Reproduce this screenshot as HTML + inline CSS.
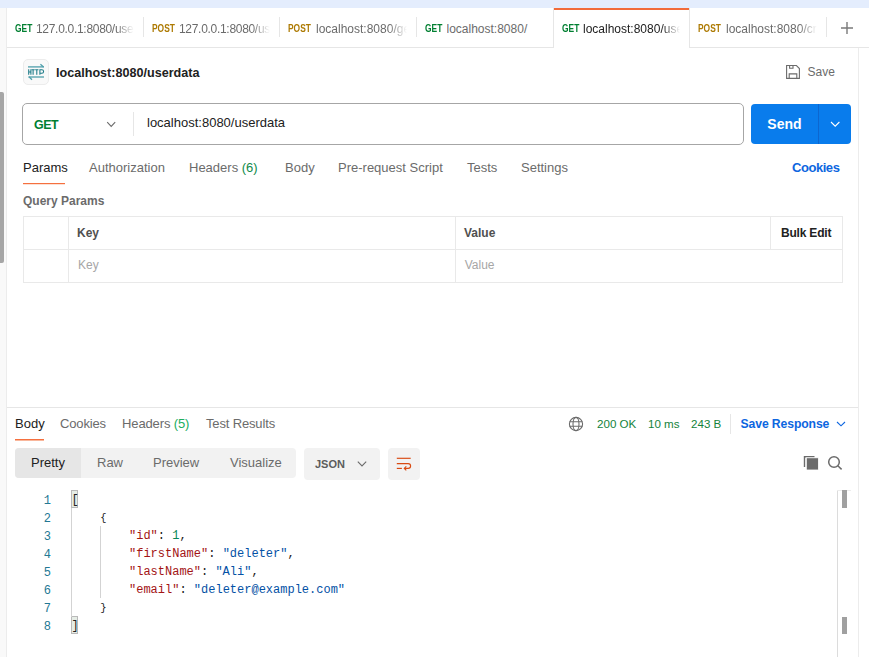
<!DOCTYPE html>
<html><head><meta charset="utf-8">
<style>
*{box-sizing:border-box;margin:0;padding:0}
html,body{width:869px;height:657px;overflow:hidden;background:#fff;font-family:"Liberation Sans",sans-serif;color:#212121;position:relative}
.abs{position:absolute}
.t{position:absolute;white-space:nowrap;line-height:1}
.topband{left:0;top:0;width:869px;height:8px;background:#e4edfd}
.lstrip{left:0;top:8px;width:7px;height:649px;background:#f9f9f9;border-right:1px solid #ececec}
.rstrip{left:858px;top:48px;width:11px;height:610px;background:#fff;border-left:1px solid #ececec}
.tabbar{left:7px;top:8px;width:862px;height:40px;background:#fff;border-bottom:1px solid #e6e6e6}
.m{font-weight:bold;font-size:10px;transform:scaleX(0.84);transform-origin:0 0}
.get{color:#007f31}
.post{color:#ad7a03}
.sep{position:absolute;width:1px;background:#e6e6e6}
.tl{position:absolute;white-space:nowrap;line-height:1;font-size:12px;color:#6b6b6b;overflow:hidden;
 -webkit-mask-image:linear-gradient(to right,#000 calc(100% - 18px),transparent 100%);mask-image:linear-gradient(to right,#000 calc(100% - 18px),transparent 100%)}
.code{position:absolute;left:0;top:0;font-family:"Liberation Mono",monospace;font-size:12px;line-height:18px;white-space:pre;color:#212121}
.k{color:#a31515}
.s{color:#0451a5}
.n{color:#098658}
.ln{position:absolute;white-space:pre;font-family:"Liberation Mono",monospace;font-size:12px;line-height:18px;color:#237893;text-align:right;width:30px}
</style></head><body>
<div class="abs topband"></div>
<div class="abs tabbar"></div>
<div class="abs lstrip"></div>
<div class="abs" style="left:0;top:91.5px;width:4px;height:171px;background:#a6a6a6;border-radius:0 2px 2px 0"></div>
<div class="abs rstrip"></div>

<!-- tabs -->
<div class="t m get" style="left:15px;top:24px">GET</div>
<div class="tl" style="left:36px;top:23px;width:98px;height:14px;letter-spacing:-0.3px">127.0.0.1:8080/user</div>
<div class="sep" style="left:143px;top:17px;height:20px"></div>
<div class="t m post" style="left:152px;top:24px">POST</div>
<div class="tl" style="left:179px;top:23px;width:91px;height:14px;letter-spacing:-0.3px">127.0.0.1:8080/user</div>
<div class="sep" style="left:279px;top:17px;height:20px"></div>
<div class="t m post" style="left:288px;top:24px">POST</div>
<div class="tl" style="left:316px;top:23px;width:91px;height:14px">localhost:8080/get</div>
<div class="sep" style="left:416px;top:17px;height:20px"></div>
<div class="t m get" style="left:425px;top:24px">GET</div>
<div class="tl" style="left:446.5px;top:23px;width:98px;height:14px;-webkit-mask-image:none;mask-image:none">localhost:8080/</div>
<div class="abs" style="left:553px;top:8px;width:137px;height:40px;background:#fff;border-left:1px solid #e6e6e6;border-right:1px solid #e6e6e6"></div>
<div class="abs" style="left:554px;top:8px;width:135px;height:2px;background:#f26b3a"></div>
<div class="t m get" style="left:562px;top:24px">GET</div>
<div class="tl" style="left:583px;top:23px;width:97px;height:14px;color:#212121">localhost:8080/user</div>
<div class="t m post" style="left:698px;top:24px">POST</div>
<div class="tl" style="left:726px;top:23px;width:91px;height:14px">localhost:8080/create</div>
<div class="sep" style="left:826px;top:17px;height:20px"></div>
<svg class="abs" style="left:840px;top:21px" width="14" height="14" viewBox="0 0 14 14"><path d="M7 1V13M1 7H13" stroke="#7a7a7a" stroke-width="1.4"/></svg>

<!-- title -->
<div class="abs" style="left:23px;top:59px;width:26px;height:26px;border:1px solid #ececec;border-radius:5px;background:#f9f9f9"></div>
<svg class="abs" style="left:22px;top:58px" width="28" height="28" viewBox="0 0 28 28">
 <g stroke="#4f9fab" stroke-width="1.3" fill="none">
  <path d="M6 8.9H22"/><path d="M18.4 6.2L21.6 9"/>
  <path d="M6.4 19H22"/><path d="M7 18.8L10 21.8"/>
 </g>
 <g stroke="#1d7b88" stroke-width="1.05" fill="none">
  <path d="M6.7 11.3V16.7M8.9 11.3V16.7M6.7 13.9H8.9"/>
  <path d="M9.5 11.8H12.7M11.1 11.8V16.7"/>
  <path d="M13.2 11.8H16.4M14.8 11.8V16.7"/>
  <path d="M17.9 16.7V11.8H19.8C21.1 11.8 21.6 12.6 21.6 13.5C21.6 14.4 21.1 15.2 19.8 15.2H17.9"/>
 </g>
</svg>
<div class="t" style="left:56px;top:67px;font-size:12.6px;font-weight:bold;color:#212121">localhost:8080/userdata</div>
<svg class="abs" style="left:785px;top:64px" width="16" height="16" viewBox="0 0 16 16">
 <g stroke="#6b6b6b" stroke-width="1.1" fill="none">
  <path d="M1.6 1.5H11.4L14.4 4.5V14.4H1.6Z"/><path d="M4.6 1.6V4.3H8V1.6"/><path d="M4.2 14.3V9.9H11.8V14.3"/>
 </g>
</svg>
<div class="t" style="left:807.6px;top:66px;font-size:12px;color:#6b6b6b">Save</div>

<!-- url bar -->
<div class="abs" style="left:22px;top:103px;width:722px;height:42px;border:1px solid #a6a6a6;border-radius:5px"></div>
<div class="t get" style="left:34px;top:119px;font-size:12.4px;font-weight:bold;letter-spacing:-0.4px">GET</div>
<svg class="abs" style="left:106px;top:121px" width="11" height="8" viewBox="0 0 11 8"><path d="M1.2 1.2L5.2 5.4L9.2 1.2" stroke="#6b6b6b" stroke-width="1.1" fill="none"/></svg>
<div class="sep" style="left:133px;top:112px;height:24px"></div>
<div class="t" style="left:147px;top:116px;font-size:13px;color:#212121">localhost:8080/userdata</div>
<div class="abs" style="left:751px;top:104px;width:100px;height:40px;background:#097cec;border-radius:4px"></div>
<div class="t" style="left:767.3px;top:117px;font-size:14px;font-weight:bold;color:#fff">Send</div>
<div class="abs" style="left:818px;top:104px;width:1px;height:40px;background:#0c66d0"></div>
<svg class="abs" style="left:829px;top:120px" width="12" height="8" viewBox="0 0 12 8"><path d="M2 2L6.2 6.2L10.4 2" stroke="#fff" stroke-width="1.1" fill="none"/></svg>

<!-- request tabs -->
<div class="t" style="left:23px;top:161px;font-size:13px;color:#212121">Params</div>
<div class="abs" style="left:23px;top:183px;width:42px;height:2px;background:linear-gradient(#f5703f 1px,#fde0d4 1px)"></div>
<div class="t" style="left:89px;top:161px;font-size:13px;color:#6b6b6b">Authorization</div>
<div class="t" style="left:189px;top:161px;font-size:13px;color:#6b6b6b">Headers <span style="color:#0f8a4a">(6)</span></div>
<div class="t" style="left:285px;top:161px;font-size:13px;color:#6b6b6b">Body</div>
<div class="t" style="left:338px;top:161px;font-size:13px;color:#6b6b6b">Pre-request Script</div>
<div class="t" style="left:467px;top:161px;font-size:13px;color:#6b6b6b">Tests</div>
<div class="t" style="left:521px;top:161px;font-size:13px;color:#6b6b6b">Settings</div>
<div class="t" style="left:792px;top:161px;font-size:13px;font-weight:bold;color:#0d66e0;letter-spacing:-0.45px">Cookies</div>

<div class="t" style="left:23px;top:195px;font-size:12px;font-weight:bold;color:#6b6b6b">Query Params</div>
<!-- table -->
<div class="abs" style="left:23px;top:216px;width:820px;height:67px;border:1px solid #e9e9e9"></div>
<div class="abs" style="left:23px;top:249px;width:820px;height:1px;background:#e9e9e9"></div>
<div class="abs" style="left:68px;top:216px;width:1px;height:67px;background:#e9e9e9"></div>
<div class="abs" style="left:455px;top:216px;width:1px;height:67px;background:#e9e9e9"></div>
<div class="abs" style="left:770px;top:216px;width:1px;height:34px;background:#e9e9e9"></div>
<div class="t" style="left:77px;top:227px;font-size:12px;font-weight:bold;color:#505050">Key</div>
<div class="t" style="left:464px;top:227px;font-size:12px;font-weight:bold;color:#505050">Value</div>
<div class="t" style="left:781px;top:227px;font-size:12px;font-weight:bold;color:#212121;letter-spacing:-0.2px">Bulk Edit</div>
<div class="t" style="left:78px;top:259px;font-size:12px;color:#a6a6a6">Key</div>
<div class="t" style="left:464.7px;top:259px;font-size:12px;color:#a6a6a6">Value</div>

<!-- response -->
<div class="abs" style="left:7px;top:407px;width:851px;height:1px;background:#e6e6e6"></div>
<div class="t" style="left:15px;top:417px;font-size:13px;color:#212121">Body</div>
<div class="abs" style="left:15px;top:439px;width:29px;height:2px;background:linear-gradient(#f5703f 1px,#f9b79c 1px)"></div>
<div class="t" style="left:60px;top:417px;font-size:13px;color:#6b6b6b;letter-spacing:-0.15px">Cookies</div>
<div class="t" style="left:122px;top:417px;font-size:13px;color:#6b6b6b;letter-spacing:-0.12px">Headers <span style="color:#20ad5f">(5)</span></div>
<div class="t" style="left:206px;top:417px;font-size:13px;color:#6b6b6b;letter-spacing:-0.15px">Test Results</div>
<svg class="abs" style="left:568px;top:416px" width="16" height="16" viewBox="0 0 16 16">
 <g stroke="#6b6b6b" stroke-width="1.1" fill="none">
  <circle cx="8" cy="8" r="6.6"/><ellipse cx="8" cy="8" rx="3" ry="6.6"/><path d="M1.6 5.8H14.4M1.6 10.2H14.4"/>
 </g>
</svg>
<div class="t" style="left:597px;top:418px;font-size:11.6px;color:#14833b">200 OK</div>
<div class="t" style="left:648px;top:418px;font-size:11.6px;color:#14833b">10 ms</div>
<div class="t" style="left:691px;top:418px;font-size:11.6px;color:#14833b">243 B</div>
<div class="sep" style="left:730px;top:414px;height:20px"></div>
<div class="t" style="left:740.5px;top:418px;font-size:12.2px;font-weight:bold;color:#0d66e0;letter-spacing:-0.1px">Save Response</div>
<svg class="abs" style="left:834.5px;top:420px" width="12" height="8" viewBox="0 0 12 8"><path d="M2 2L6 5.8L10 2" stroke="#0d66e0" stroke-width="1.1" fill="none"/></svg>

<div class="abs" style="left:15px;top:448px;width:281px;height:30px;background:#f2f2f2;border-radius:4px"></div>
<div class="abs" style="left:15px;top:448px;width:66px;height:30px;background:#e6e6e6;border-radius:4px 0 0 4px"></div>
<div class="t" style="left:31px;top:456px;font-size:13px;color:#212121">Pretty</div>
<div class="t" style="left:97px;top:456px;font-size:13px;color:#6b6b6b">Raw</div>
<div class="t" style="left:153px;top:456px;font-size:13px;color:#6b6b6b">Preview</div>
<div class="t" style="left:230px;top:456px;font-size:13px;color:#6b6b6b">Visualize</div>
<div class="abs" style="left:304px;top:448px;width:76px;height:31.5px;background:#f2f2f2;border-radius:4px"></div>
<div class="t" style="left:315px;top:459px;font-size:11px;font-weight:bold;color:#5c5c5c">JSON</div>
<svg class="abs" style="left:356px;top:460px" width="12" height="8" viewBox="0 0 12 8"><path d="M1.8 1.6L6 5.9L10.2 1.6" stroke="#6b6b6b" stroke-width="1.1" fill="none"/></svg>
<div class="abs" style="left:388px;top:448px;width:32px;height:31.5px;background:#f2f2f2;border-radius:4px"></div>
<svg class="abs" style="left:394px;top:455px" width="20" height="18" viewBox="0 0 20 18">
 <g stroke="#d94a12" stroke-width="1.15" fill="none">
  <path d="M2.8 3.3H16.7"/><path d="M2.8 8.6H14.2C15.9 8.6 16.6 9.7 16.6 11C16.6 12.3 15.9 13.4 14.2 13.4H10.5"/>
  <path d="M12.3 11.4L10.3 13.4L12.3 15.4"/><path d="M2.8 13.4H7.9"/>
 </g>
</svg>
<svg class="abs" style="left:802px;top:455px" width="18" height="16" viewBox="0 0 18 16">
 <path d="M2.5 12V1.8H12.5" stroke="#6b6b6b" stroke-width="1.4" fill="none"/>
 <rect x="4.3" y="2.8" width="12.1" height="12.2" fill="#6b6b6b" stroke="#fff" stroke-width="0.8"/>
</svg>
<svg class="abs" style="left:826px;top:454px" width="18" height="18" viewBox="0 0 18 18">
 <circle cx="8" cy="8" r="5.3" stroke="#6b6b6b" stroke-width="1.5" fill="none"/><path d="M11.8 11.8L15.6 15.4" stroke="#6b6b6b" stroke-width="1.5"/>
</svg>

<!-- code -->
<div class="ln" style="left:21px;top:491.5px">1
2
3
4
5
6
7
8</div>
<div class="abs" style="left:71px;top:490px;width:7px;height:17.5px;background:#e6ede6;border:1px solid #b9b9b9"></div>
<div class="abs" style="left:71px;top:616px;width:7px;height:17.5px;background:#e6ede6;border:1px solid #b9b9b9"></div>
<div class="abs" style="left:71px;top:507.5px;width:1px;height:109px;background:#d3d3d3"></div>
<div class="abs" style="left:100px;top:526px;width:1px;height:72px;background:#d3d3d3"></div>
<div class="code" style="left:71.4px;top:491px">[
    <span style="font-size:10.5px">{</span>
        <span class="k">"id"</span>: <span class="n">1</span>,
        <span class="k">"firstName"</span>: <span class="s">"deleter"</span>,
        <span class="k">"lastName"</span>: <span class="s">"Ali"</span>,
        <span class="k">"email"</span>: <span class="s">"deleter@example.com"</span>
    <span style="font-size:10.5px">}</span>
]</div>
<!-- code scrollbar -->
<div class="abs" style="left:837px;top:490px;width:1px;height:167px;background:#dcdcdc"></div>
<div class="abs" style="left:837px;top:490px;width:14px;height:1px;background:#ececec"></div>
<div class="abs" style="left:842px;top:490px;width:5px;height:17.5px;background:#a0a0a0"></div>
<div class="abs" style="left:842px;top:616.5px;width:5px;height:17.5px;background:#a0a0a0"></div>
</body></html>
